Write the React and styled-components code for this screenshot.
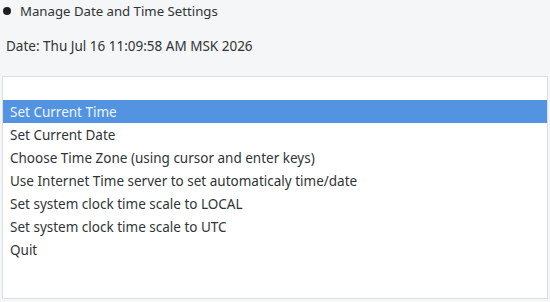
import React from "react";
import styled, { createGlobalStyle } from "styled-components";

const GlobalStyle = createGlobalStyle`
  html, body {
    margin: 0;
    padding: 0;
    background: #f5f6f7;
  }
  body {
    font-family: "Noto Sans", "Open Sans", sans-serif;
    font-size: 13.5px;
    color: #2f3436;
  }
`;

const items = [
  "Set Current Time",
  "Set Current Date",
  "Choose Time Zone (using cursor and enter keys)",
  "Use Internet Time server to set automaticaly time/date",
  "Set system clock time scale to LOCAL",
  "Set system clock time scale to UTC",
  "Quit",
];

export default function App() {
  const [selected, setSelected] = React.useState(0);

  return (
    <Page>
      <GlobalStyle />
      <Title>
        <Bullet />
        Manage Date and Time Settings
      </Title>
      <DateLine>Date: Thu Jul 16 11:09:58 AM MSK 2026</DateLine>
      <List>
        <Row />
        {items.map((item, i) => (
          <Row
            key={item}
            $active={i === selected}
            onClick={() => setSelected(i)}
          >
            {item}
          </Row>
        ))}
      </List>
    </Page>
  );
}

const Page = styled.div`
  width: 550px;
  height: 302px;
  display: flex;
  flex-direction: column;
  box-sizing: border-box;
  padding: 0 2px 3px 2px;
`;

const Title = styled.div`
  display: flex;
  align-items: center;
  gap: 9px;
  height: 22px;
  padding-left: 1px;
  font-size: 13.2px;
`;

const Bullet = styled.span`
  width: 8px;
  height: 8px;
  border-radius: 50%;
  background: #1c1f21;
`;

const DateLine = styled.div`
  height: 22px;
  line-height: 22px;
  margin-top: 13px;
  padding-left: 4px;
`;

const List = styled.div`
  flex: 1;
  margin-top: 19px;
  background: #ffffff;
  border: 1px solid #dcdfe3;
  display: flex;
  flex-direction: column;
`;

const Row = styled.div`
  box-sizing: border-box;
  height: 23px;
  line-height: 21px;
  padding: 2px 0 0 7px;
  white-space: nowrap;
  cursor: default;
  background: ${({ $active }) => ($active ? "#5294e2" : "transparent")};
  color: ${({ $active }) => ($active ? "#eef4fc" : "#2f3436")};
`;
